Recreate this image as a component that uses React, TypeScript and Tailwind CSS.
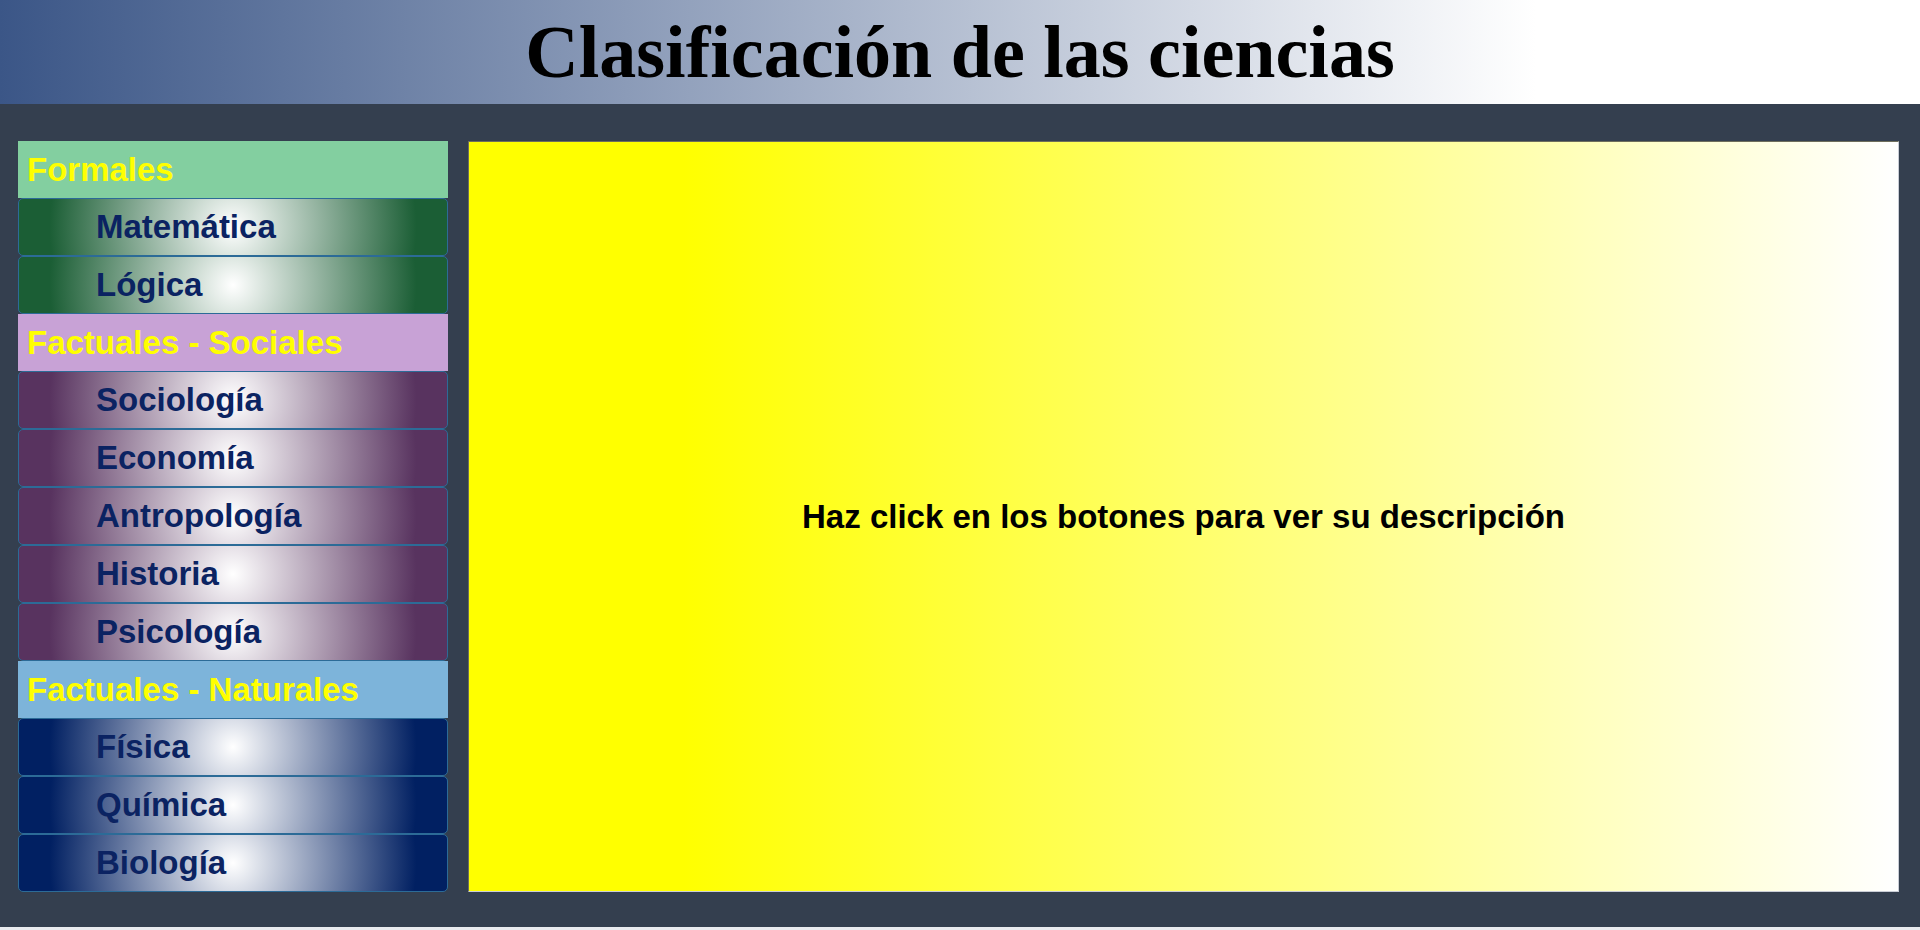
const groups = [
  {
    title: 'Formales',
    head: 'bg-[#83cfa0]',
    btn: 'bg-[radial-gradient(circle,#ffffff_0%,#1b5e35_85%)]',
    items: ['Matemática', 'Lógica'],
  },
  {
    title: 'Factuales - Sociales',
    head: 'bg-[#c8a2d6]',
    btn: 'bg-[radial-gradient(circle,#ffffff_0%,#58335f_85%)]',
    items: ['Sociología', 'Economía', 'Antropología', 'Historia', 'Psicología'],
  },
  {
    title: 'Factuales - Naturales',
    head: 'bg-[#7db4da]',
    btn: 'bg-[radial-gradient(circle,#ffffff_0%,#012062_85%)]',
    items: ['Física', 'Química', 'Biología'],
  },
]

export default function App() {
  return (
    <div className="min-h-screen bg-[#e9ebef] font-['Liberation_Sans',Arial,sans-serif]">
      {/* Cabecera */}
      <header className="h-[104px] flex items-center justify-center bg-[linear-gradient(to_right,#3b5687,#ffffff_80%)]">
        <h1 className="font-['Liberation_Serif','Times_New_Roman',serif] font-bold text-[74px] leading-none text-black">
          Clasificación de las ciencias
        </h1>
      </header>

      <div className="h-[823px] bg-[#343f4f] flex gap-5 pl-[18px] pr-[21px] pt-[37px]">
        {/* Menú lateral */}
        <nav className="w-[430px] shrink-0 flex flex-col">
          {groups.map(g => (
            <div key={g.title} className="flex flex-col">
              <div className={`h-[57px] flex items-center pl-[9px] text-[33px] font-bold text-[#ffff00] ${g.head}`}>
                {g.title}
              </div>
              {g.items.map(item => (
                <button
                  key={item}
                  className={`h-[58px] flex items-center pl-[77px] rounded-[5px] border border-[#2c6b97] text-[33px] font-bold text-[#0b2362] text-left ${g.btn}`}
                >
                  {item}
                </button>
              ))}
            </div>
          ))}
        </nav>

        {/* Panel de descripción */}
        <main className="flex-1 h-[751px] flex items-center justify-center border border-t-[#6e6e5c] border-l-[#6e6e5c] border-r-[#c9cdd6] border-b-[#c9cdd6] bg-[linear-gradient(to_right,#ffff00_15%,#ffffff)]">
          <p className="text-[33px] font-bold text-black">Haz click en los botones para ver su descripción</p>
        </main>
      </div>
    </div>
  )
}
